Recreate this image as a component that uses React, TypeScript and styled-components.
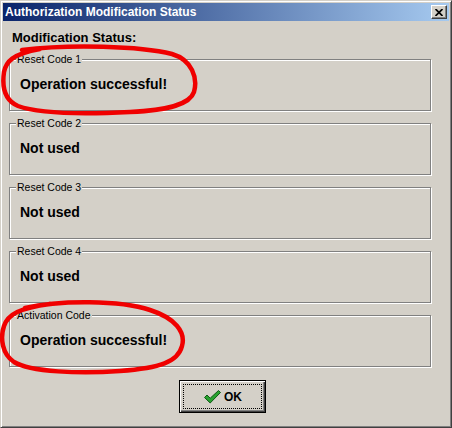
import React, { FC } from "react";
import styled, { createGlobalStyle } from "styled-components";

const GlobalStyle = createGlobalStyle`
  html, body {
    margin: 0;
    padding: 0;
    background: #d4d0c8;
  }
  body {
    font-family: "Liberation Sans", Arial, sans-serif;
  }
`;

const Window = styled.div`
  position: relative;
  width: 452px;
  height: 428px;
  box-sizing: border-box;
  display: flex;
  flex-direction: column;
  padding: 2px;
  background: #d4d0c8;
  border: 1px solid;
  border-color: #d4d0c8 #404040 #404040 #d4d0c8;
  box-shadow: inset 1px 1px 0 #fff, inset -1px -1px 0 #808080;
`;

const TitleBar = styled.div`
  height: 18px;
  display: flex;
  justify-content: space-between;
  align-items: flex-start;
  padding-left: 2px;
  background: linear-gradient(to right, #0a246a, #a6caf0);
  color: #fff;
  font-size: 12px;
  font-weight: bold;
  line-height: 18px;
  white-space: nowrap;
`;

const CloseButton = styled.div`
  width: 16px;
  height: 14px;
  margin: 2px 2px 0 0;
  box-sizing: border-box;
  display: flex;
  align-items: center;
  justify-content: center;
  background: #d4d0c8;
  border: 1px solid;
  border-color: #fff #404040 #404040 #fff;
  box-shadow: inset -1px -1px 0 #808080;
`;

const Body = styled.div`
  display: flex;
  flex-direction: column;
  padding-left: 6px;
`;

const Heading = styled.div`
  margin: 9px 0 8px 3px;
  font-size: 13px;
  font-weight: bold;
  line-height: 15px;
  color: #000;
`;

const Group = styled.fieldset`
  width: 422px;
  min-width: 0;
  box-sizing: border-box;
  margin: 0 0 6px 0;
  padding: 10px 6px 18px 6px;
  border: 1px solid #808080;
  box-shadow: 1px 1px 0 #fff, inset 1px 1px 0 #fff;
`;

const GroupLabel = styled.legend`
  padding: 0 1px;
  font-size: 10.5px;
  line-height: 13px;
  color: #000;
  background: #d4d0c8;
`;

const Value = styled.div`
  margin-left: 4px;
  font-size: 14px;
  font-weight: bold;
  line-height: 16px;
  color: #000;
`;

const ButtonRow = styled.div`
  display: flex;
  margin-top: 7px;
  padding-left: 170px;
`;

const OkButton = styled.button`
  position: relative;
  width: 87px;
  height: 33px;
  box-sizing: border-box;
  display: flex;
  align-items: center;
  justify-content: center;
  gap: 3px;
  padding: 0 0 0 1px;
  background: #d4d0c8;
  border: 1px solid #000;
  box-shadow: inset 1px 1px 0 #fff, inset -1px -1px 0 #404040,
    inset -2px -2px 0 #808080;
  font-family: "Liberation Sans", Arial, sans-serif;
  font-size: 12px;
  font-weight: bold;
  color: #000;

  &::after {
    content: "";
    position: absolute;
    inset: 3px;
    border: 1px dotted #000;
  }
`;

const Marks = styled.svg`
  position: absolute;
  top: -1px;
  left: -1px;
  pointer-events: none;
`;

const groups = [
  { label: "Reset Code 1", value: "Operation successful!" },
  { label: "Reset Code 2", value: "Not used" },
  { label: "Reset Code 3", value: "Not used" },
  { label: "Reset Code 4", value: "Not used" },
  { label: "Activation Code", value: "Operation successful!" },
];

const CheckIcon: FC = () => (
  <svg width="17" height="14" viewBox="0 0 17 14">
    <path
      d="M0.5 7.5 L3 5 L6.2 8.2 L14.5 0.5 L16.5 2.5 L6.2 13 Z"
      fill="#27a12f"
      stroke="#0d5a12"
      strokeWidth="1"
      strokeLinejoin="round"
    />
  </svg>
);

export const App: FC = () => {
  return (
    <>
      <GlobalStyle />
      <Window>
        <TitleBar>
          <span>Authorization Modification Status</span>
          <CloseButton>
            <svg width="8" height="7" viewBox="0 0 8 7">
              <path d="M0.5 0 L7.5 7 M7.5 0 L0.5 7" stroke="#000" strokeWidth="1.7" />
            </svg>
          </CloseButton>
        </TitleBar>
        <Body>
          <Heading>Modification Status:</Heading>
          {groups.map((g) => (
            <Group key={g.label}>
              <GroupLabel>{g.label}</GroupLabel>
              <Value>{g.value}</Value>
            </Group>
          ))}
          <ButtonRow>
            <OkButton>
              <CheckIcon />
              OK
            </OkButton>
          </ButtonRow>
        </Body>
        {/* hand drawn red marks around the successful codes */}
        <Marks width="452" height="428" viewBox="0 0 452 428">
          <path
            d="M22 50 C70 44, 140 46, 172 54 C192 60, 198 78, 194 92 C190 104, 170 110, 130 112 C90 114, 40 114, 18 106 C4 100, 2 86, 4 72 C6 62, 12 54, 40 49"
            fill="none"
            stroke="#f00000"
            strokeWidth="4.5"
            strokeLinecap="round"
          />
          <path
            d="M25 308 C60 300, 120 300, 150 310 C175 318, 186 332, 182 346 C178 362, 160 368, 120 371 C80 374, 30 372, 14 362 C2 354, 0 338, 4 326 C8 314, 20 308, 50 304"
            fill="none"
            stroke="#f00000"
            strokeWidth="4.5"
            strokeLinecap="round"
          />
        </Marks>
      </Window>
    </>
  );
};

export default App;
